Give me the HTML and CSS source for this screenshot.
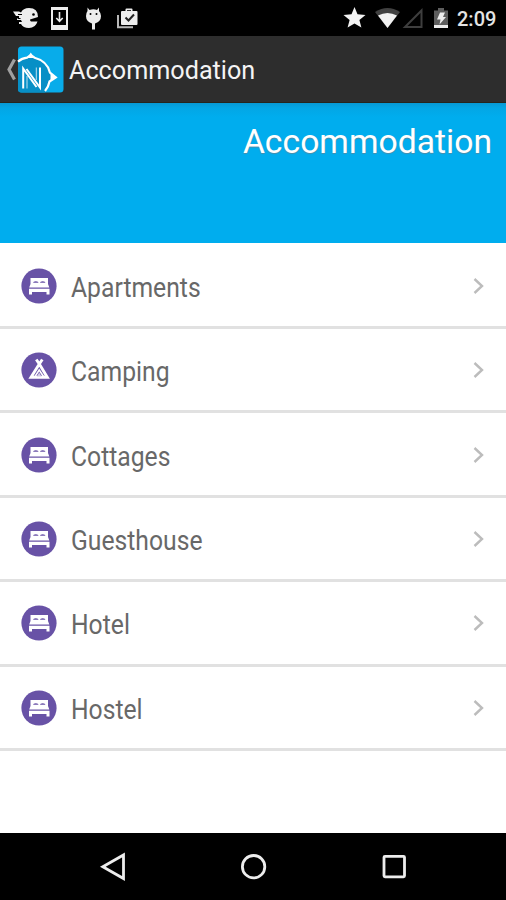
FILE: index.html
```
<!DOCTYPE html>
<html lang="en">
<head>
<meta charset="utf-8">
<title>Accommodation</title>
<link rel="stylesheet" href="styles.css">
</head>
<body>
<svg class="defs" width="0" height="0" aria-hidden="true">
  <symbol id="bed" viewBox="0 0 36 36">
    <circle cx="18" cy="18" r="17.6" fill="#6852a6"/>
    <path fill="#fff" d="M9.500 10h17.500v6l1.300 3.600H8.200L9.500 16zM8 20.700h20.500V26.500h-3v-2.500H11V26.500H8z"/>
    <path fill="#6852a6" d="M12.300 14.800v-.8q2.500-1.600 5 0v.8zM19.200 14.800v-.8q2.500-1.600 5 0v.8z"/>
  </symbol>
  <symbol id="tent" viewBox="0 0 36 36">
    <circle cx="18" cy="18" r="17.6" fill="#6852a6"/>
    <path fill="none" stroke="#fff" stroke-width="2.900" d="M15.300 7.500 18.300 12 26.300 25.200H10L18.300 12 21.300 7.500"/>
    <path fill="none" stroke="#fff" stroke-width="1.500" d="M13.700 25 18.200 18 22.800 25"/>
    <path fill="#d5cde8" d="m18.200 20.500 2.300 4h-4.600z"/>
  </symbol>
  <symbol id="chevron" viewBox="0 0 14 18">
    <path d="m2.500 2 7.500 7-7.500 7" fill="none" stroke="#bcbcbc" stroke-width="2.400"/>
  </symbol>
</svg>
<main class="screen">
  <div class="status">
    <svg width="140" height="36" viewBox="0 0 140 36" aria-hidden="true">
      <path fill="#ededed" d="M13 11.500h6l2 1q2-4.500 8-4.500 9 0 9 9l-8 2.500q0 1.500 1 2h6.500q-2 6.500-8.500 6.500-6 0-8-4h-2v-2h3l-1-2h-4v-2h2v-2h-3z"/>
      <path stroke="#000" d="M18 14.500h4M17.500 18.500h3"/><circle cx="33.500" cy="14.500" r="1.300" fill="#000"/>
      <path fill="#ededed" d="M51 7h17v23H51z"/><path fill="#000" d="M53 10h13v15H53z"/>
      <path d="M59.500 12v9m-3.200-3 3.200 3.400 3.200-3.400" fill="none" stroke="#ededed" stroke-width="1.600"/>
      <path fill="#ededed" d="M87.500 7.500 89.500 10q4-1.500 7.500 0L99 7.500 99 11q2 2 2 5 0 5.500-6 7.500v6h-3v-6q-6-2-6-7.500 0-3 1.500-5z"/>
      <circle cx="90.500" cy="14" r="1"/><circle cx="96.500" cy="14" r="1"/>
      <path d="M118 15v12.200h15" fill="none" stroke="#b8b8b8" stroke-width="2"/>
      <path fill="#ededed" d="M121 12q0-1 1-1h3.500V9.500q0-1 1-1h5q1 0 1 1V11h4q1 0 1 1v12q0 1-1 1H122q-1 0-1-1z"/>
      <path d="M127 10.500h4" stroke="#333"/><path d="m125.500 17.500 3 3 5.500-6" fill="none" stroke="#222" stroke-width="2"/>
    </svg>
    <svg class="signals" width="110" height="36" viewBox="0 0 110 36" aria-hidden="true">
      <path fill="#f2f2f2" d="m13.500 7 3 7.300 8 .6-6.100 5 2 7.600-6.900-4-6.900 4 2-7.600-6.100-5 8-.6z"/>
      <path fill="#414141" d="M34 12q12.500-8 25 0L46.500 28z"/><path fill="#f2f2f2" d="M37 15.500q9.500-5 19 0L46.500 28z"/>
      <path d="M80.500 10.500V27H64z" fill="none" stroke="#3e3e3e" stroke-width="2"/>
      <path fill="#5e5e5e" d="M93 10.500h4V8h6v2.500h4V25H93z"/><path fill="#ededed" d="M93 25h14v3H93zM99 12.500h5L102 17h3l-6.500 7.500 1-5H96z"/>
    </svg>
    <span class="time">2:09</span>
  </div>
  <header class="bar">
    <svg width="66" height="66" viewBox="0 0 66 66" aria-hidden="true">
      <path d="M14.500 23.500 9 33.500l5.500 10" fill="none" stroke="#a0a0a0" stroke-width="3.200"/>
      <rect x="18" y="10.500" width="45.500" height="46" rx="3.500" fill="#08acea"/>
      <path fill="#078fc6" d="M18 26q4-4 9-4.500l4-2.500 4 2.500q13 3 15.500 15l5 5-5.500 3.500q-1 6-5 11.500H21.500Q18 56.500 18 53z"/>
      <path d="M18 25.700q4-3.500 9-4l3.800-2.700 3.800 2.700q12.700 3.300 15.400 15l5.800 4.600-6.300 4.200q-1 5.500-4.500 9.500" fill="none" stroke="#fff" stroke-width="2.200"/>
      <path fill="#fff" d="m30.800 16.500 3.500 5.500h-7zM50.500 38l6.500 3.300-6.500 4z"/>
      <path d="M23.200 52.500V32.500L36.500 51M40 31.500V51.500L26.500 33" fill="none" stroke="#fff" stroke-width="2"/>
      <path d="M27 52.500V40M36.300 31.500V44" fill="none" stroke="#fff" stroke-opacity=".75"/>
    </svg>
    <h1 class="title">Accommodation</h1>
  </header>
  <section class="banner"><h2 class="heading">Accommodation</h2></section>
  <ul class="list">
    <li class="row"><svg class="icon"><use href="#bed"/></svg><span class="label">Apartments</span><svg class="chevron"><use href="#chevron"/></svg></li>
    <li class="row"><svg class="icon"><use href="#tent"/></svg><span class="label">Camping</span><svg class="chevron"><use href="#chevron"/></svg></li>
    <li class="row"><svg class="icon"><use href="#bed"/></svg><span class="label">Cottages</span><svg class="chevron"><use href="#chevron"/></svg></li>
    <li class="row"><svg class="icon"><use href="#bed"/></svg><span class="label">Guesthouse</span><svg class="chevron"><use href="#chevron"/></svg></li>
    <li class="row"><svg class="icon"><use href="#bed"/></svg><span class="label">Hotel</span><svg class="chevron"><use href="#chevron"/></svg></li>
    <li class="row"><svg class="icon"><use href="#bed"/></svg><span class="label">Hostel</span><svg class="chevron"><use href="#chevron"/></svg></li>
  </ul>
  <nav class="nav">
    <svg width="506" height="67" viewBox="0 0 506 67" fill="none" stroke="#ededed" stroke-width="2.800" aria-hidden="true">
      <path d="M123.500 22v23.500L102.800 33.700z"/>
      <circle cx="253.600" cy="33.700" r="11.200"/>
      <rect x="384" y="23.300" width="20.500" height="20.500" rx="1"/>
    </svg>
  </nav>
</main>
</body>
</html>
```
FILE: styles.css
```
* { box-sizing: border-box; }
body { margin: 0; font-family: Roboto, "Liberation Sans", sans-serif; background: #fff; }
.defs { display: block; height: 0; }
.screen { width: 506px; height: 900px; display: flex; flex-direction: column; overflow: hidden; }
.status { height: 36px; flex: none; background: #000; display: flex; align-items: center; padding-right: 11px; }
.signals { margin-left: auto; margin-right: 6px; }
.time { color: #e4e4e4; font-size: 20px; font-weight: 500; line-height: 36px; padding-top: 2px; width: 38px; white-space: nowrap; }
.bar { height: 67px; flex: none; background: #2d2d2d; display: flex; align-items: center; border-bottom: 1px solid #26251d; }
.title { margin: 4px 0 0 3px; color: #f4f4f4; font-size: 25.2px; font-weight: 400; line-height: 30px; }
.banner { height: 140px; flex: none; background: linear-gradient(#0799d4, #03a6e5 5px, #00adee 14px); padding: 18px 14px 0; }
.heading { margin: 0; text-align: right; color: #fff; font-size: 33.7px; line-height: 42px; font-weight: 400; text-shadow: 0 1px 1px #4d8ca8; }
.list { list-style: none; margin: 0; padding: 1.6px 0 0; flex: 1; }
.row { height: 84.4px; display: flex; align-items: center; border-bottom: 3px solid #e1e1e1; padding: 1px 20px 0 21px; }
.icon { width: 36px; height: 36px; flex: none; }
.label { margin-left: 14px; padding-top: 4px; color: #686868; font-size: 28px; line-height: 36px; transform: scaleX(.882); transform-origin: left center; }
.chevron { width: 14px; height: 18px; margin-left: auto; }
.nav { height: 67px; flex: none; background: #000; }
.nav svg { display: block; }
```
